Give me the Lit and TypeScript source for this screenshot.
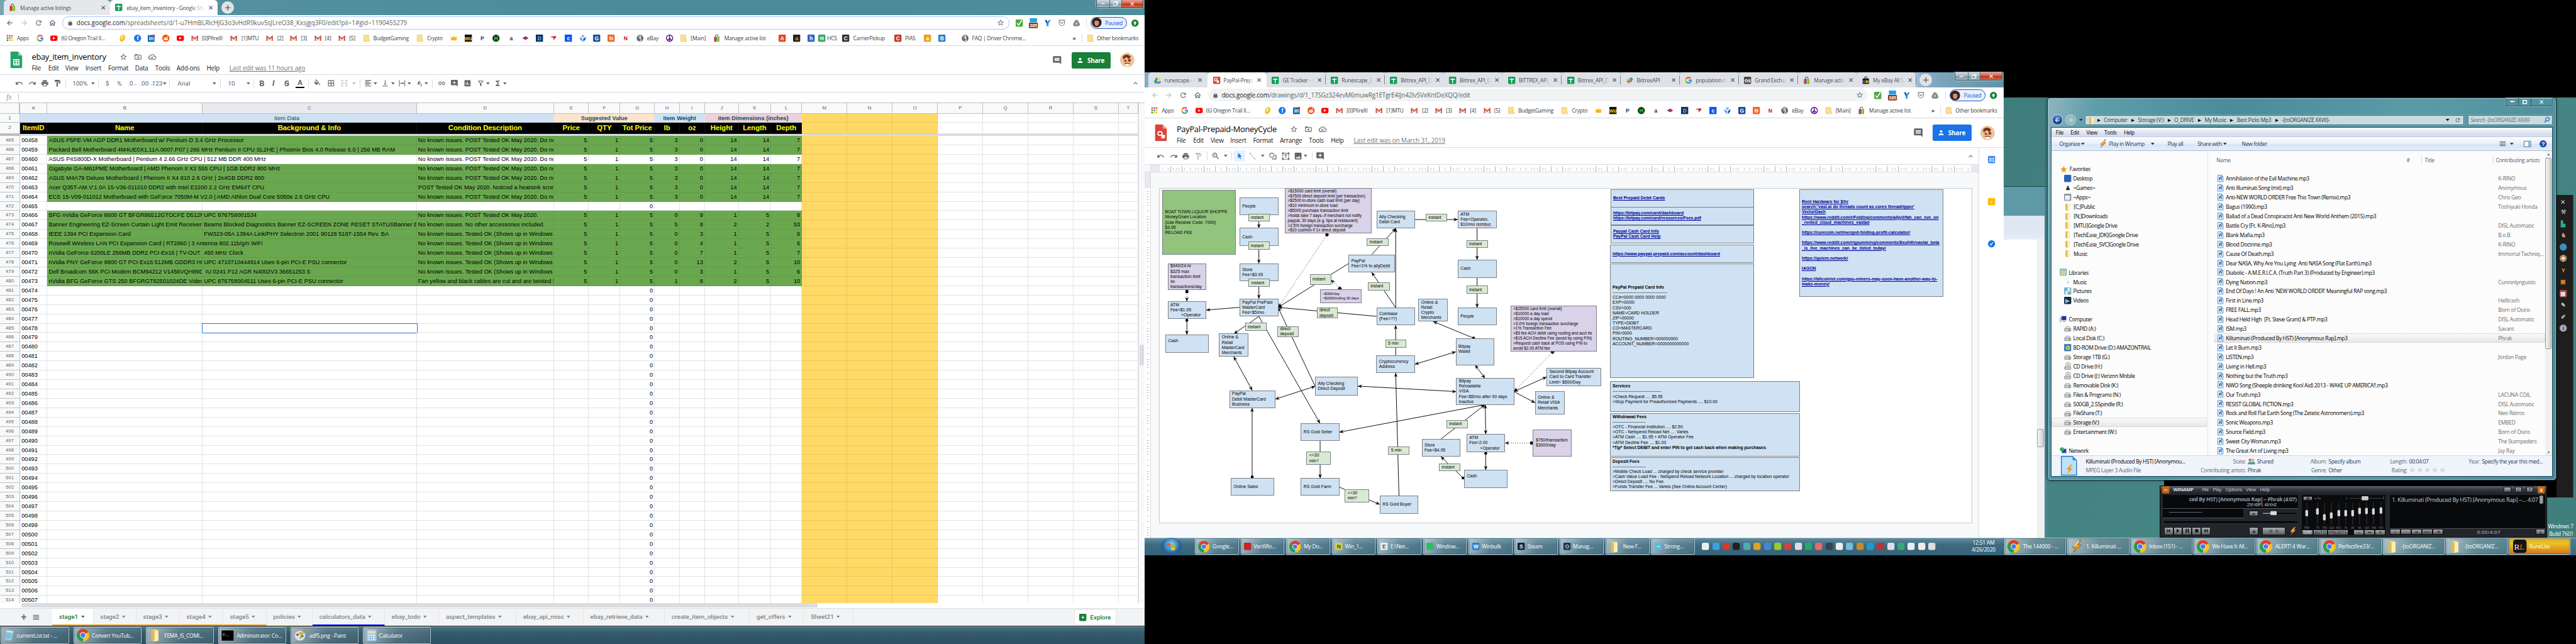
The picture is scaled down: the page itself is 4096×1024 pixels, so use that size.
import { LitElement, html, svg, css, nothing } from "lit";

/* ---------- shared pieces ---------- */

const base = css`
  :host { display: block; }
  * { box-sizing: border-box; }
  .row { display: flex; align-items: center; }
  .col { display: flex; flex-direction: column; }
  .grow { flex: 1 1 auto; }
  .track { display: flex; align-items: center; height: 100%; white-space: nowrap; }
  .slot { flex: none; display: flex; align-items: center; height: 100%; white-space: nowrap; }
  svg { display: block; flex: none; overflow: visible; }
  .ui { font-family: "Open Sans", "Noto Sans", sans-serif; letter-spacing: -0.35px; }
  .sep { width: 1px; height: 20px; background: #dadce0; }

  .strip { display: flex; align-items: flex-end; height: 34px; flex: none; }
  .tab { display: flex; align-items: center; height: 34px; flex: none; font-size: 12px; color: #45494d; padding: 0 10px 0 12px; border-radius: 8px 8px 0 0; gap: 9px; position: relative; }
  .tab.on { background: #fff; color: #3c4043; }
  .tab .lbl { flex: 1 1 0; overflow: hidden; white-space: nowrap; -webkit-mask-image: linear-gradient(90deg, #000 80%, transparent); }
  .newtab { width: 28px; height: 28px; border-radius: 50%; display: flex; align-items: center; justify-content: center; background: #dfe4e7; align-self: center; }
  .wctl { display: flex; align-self: flex-start; height: 18px; border: 1px solid #2c4a5a; border-top: 0; border-radius: 0 0 5px 5px; overflow: hidden; box-shadow: 0 0 0 1px #c8dbe3; }
  .wctl span { display: flex; align-items: center; justify-content: center; background: linear-gradient(#cbd9e0, #a5bac5 50%, #7f9aa9 50%, #9db6c3); border-right: 1px solid #4d6b79; color: #fff; }
  .wctl .x { background: linear-gradient(#e8a593, #cf5842 50%, #b8301c 50%, #d76a4d); border-right: 0; }

  .nav { height: 34px; flex: none; background: #fff; }
  .omni { display: flex; align-items: center; height: 28px; border-radius: 14px; background: #f1f3f4; padding: 0 10px; font-size: 14px; color: #5f6368; letter-spacing: -0.24px; }
  .omni b { font-weight: 400; color: #202124; }
  .pill { display: flex; align-items: center; gap: 8px; width: 81px; height: 27px; border: 1px solid #1a56c4; border-radius: 14px; background: #e8f0fe; color: #1a56c4; font-size: 12px; padding-left: 1px; }
  .marks { height: 35px; flex: none; background: #fff; border-bottom: 1px solid #d5d7da; font-size: 12px; color: #3c4043; }

  .dochead { height: 65px; flex: none; background: #fff; border-bottom: 1px solid #dadce0; display: flex; padding-left: 22px; }
  .title { height: 42px; font: 18px "Open Sans", sans-serif; letter-spacing: -0.35px; color: #000; display: flex; align-items: center; gap: 14px; padding-top: 5px; }
  .menus { height: 20px; font: 14px "Open Sans", sans-serif; letter-spacing: -0.35px; color: #202124; margin-top: -3px; }
  .menus .edit { color: #777; text-decoration: underline; letter-spacing: -0.12px; }
  .share { display: flex; align-items: center; justify-content: center; gap: 5px; width: 87px; height: 36px; border-radius: 4px; color: #fff; font: 700 14px "Open Sans", sans-serif; letter-spacing: -0.3px; }
  .tools { flex: none; background: #fff; color: #5f6368; font: 14px Roboto, sans-serif; border-bottom: 1px solid #dadce0; }
  .tools b, .tools i, .tools s, .tools u { font: 700 18px Roboto, sans-serif; color: #5f6368; }
  .tools i { font-style: italic; font-family: "Liberation Serif", serif; }
  .tools u { text-decoration: none; border-bottom: 4px solid #000; line-height: 18px; width: 20px; text-align: center; font-size: 16px; }

  .task { height: 40px; flex: none; display: flex; align-items: center; background: linear-gradient(#8fa9b2 0 1px, #46707e 2px, #34596a 40%, #2c5162); color: #fff; font: 12px "Open Sans", sans-serif; letter-spacing: -0.35px; }
  .tb { display: flex; align-items: center; gap: 6px; height: 38px; border: 1px solid #b9c8cf; border-radius: 3px; background: linear-gradient(100deg, rgba(255,255,255,.55), rgba(255,255,255,.16) 50%, rgba(255,255,255,.08)); box-shadow: inset 0 0 0 1px rgba(30,60,75,.5); padding: 0 6px; white-space: nowrap; overflow: hidden; flex: none; }
`;

const P: Record<string, string> = {
  back: "M20 11H7.83l5.59-5.59L12 4l-8 8 8 8 1.41-1.41L7.83 13H20v-2z",
  fwd: "M12 4l-1.41 1.41L16.17 11H4v2h12.17l-5.58 5.59L12 20l8-8z",
  reload: "M17.65 6.35C16.2 4.9 14.21 4 12 4c-4.42 0-7.99 3.58-7.99 8s3.57 8 7.99 8c3.73 0 6.84-2.55 7.73-6h-2.08c-.82 2.33-3.04 4-5.65 4-3.31 0-6-2.69-6-6s2.69-6 6-6c1.66 0 3.14.69 4.22 1.78L13 11h7V4l-2.35 2.35z",
  home: "M12 5.69l5 4.5V18h-2v-6H9v6H7v-7.81l5-4.5M12 3L2 12h3v8h6v-6h2v6h6v-8h3L12 3z",
  lock: "M18 8h-1V6c0-2.76-2.24-5-5-5S7 3.24 7 6v2H6c-1.1 0-2 .9-2 2v10c0 1.1.9 2 2 2h12c1.1 0 2-.9 2-2V10c0-1.1-.9-2-2-2zM8.9 8V6c0-1.71 1.39-3.1 3.1-3.1 1.71 0 3.1 1.39 3.1 3.1v2H8.9z",
  star: "M22 9.24l-7.19-.62L12 2 9.19 8.63 2 9.24l5.46 4.73L5.82 21 12 17.27 18.18 21l-1.63-7.03L22 9.24zM12 15.4l-3.76 2.27 1-4.28-3.32-2.88 4.38-.38L12 6.1l1.71 4.04 4.38.38-3.32 2.88 1 4.28L12 15.4z",
  starFull: "M12 17.27L18.18 21l-1.64-7.03L22 9.24l-7.19-.61L12 2 9.19 8.63 2 9.24l5.46 4.73L5.82 21z",
  undo: "M12.5 8c-2.65 0-5.05.99-6.9 2.6L2 7v9h9l-3.62-3.62c1.39-1.16 3.16-1.88 5.12-1.88 3.54 0 6.55 2.31 7.6 5.5l2.37-.78C21.08 11.03 17.15 8 12.5 8z",
  redo: "M18.4 10.6C16.55 8.99 14.15 8 11.5 8c-4.65 0-8.58 3.03-9.96 7.22L3.9 16c1.05-3.19 4.05-5.5 7.6-5.5 1.95 0 3.73.72 5.12 1.88L13 16h9V7l-3.6 3.6z",
  print: "M19 8H5c-1.66 0-3 1.34-3 3v6h4v4h12v-4h4v-6c0-1.66-1.34-3-3-3zm-3 11H8v-5h8v5zm3-7c-.55 0-1-.45-1-1s.45-1 1-1 1 .45 1 1-.45 1-1 1zm-1-9H6v4h12V3z",
  paint: "M18 4V3c0-.55-.45-1-1-1H5c-.55 0-1 .45-1 1v4c0 .55.45 1 1 1h12c.55 0 1-.45 1-1V6h1v4H9v11c0 .55.45 1 1 1h2c.55 0 1-.45 1-1v-9h8V4h-3z",
  fill: "M16.56 8.94L7.62 0 6.21 1.41l2.38 2.38-5.15 5.15c-.59.59-.59 1.54 0 2.12l5.5 5.5c.29.29.68.44 1.06.44s.77-.15 1.06-.44l5.5-5.5c.59-.58.59-1.53 0-2.12zM5.21 10L10 5.21 14.79 10H5.21zM19 11.5s-2 2.17-2 3.5c0 1.1.9 2 2 2s2-.9 2-2c0-1.33-2-3.5-2-3.5z",
  borders: "M3 3v18h18V3H3zm8 16H5v-6h6v6zm0-8H5V5h6v6zm8 8h-6v-6h6v6zm0-8h-6V5h6v6z",
  merge: "M3 3h7v2H5v4H3V3zm11 0h7v6h-2V5h-5V3zM3 15h2v4h5v2H3v-6zm16 0h2v6h-7v-2h5v-4zM3 11h5V9l3 3-3 3v-2H3v-2zm18 0h-5V9l-3 3 3 3v-2h5v-2z",
  align: "M15 15H3v2h12v-2zm0-8H3v2h12V7zM3 13h18v-2H3v2zm0 8h18v-2H3v2zM3 3v2h18V3H3z",
  valign: "M16 13h-3V3h-2v10H8l4 4 4-4zM4 19v2h16v-2H4z",
  wrap: "M3 3h2v18H3V3zm16 0h2v18h-2V3zM7 11h7V8l4 4-4 4v-3H7v-2z",
  rotate: "M12.8 5.8l-1.5-.7-5 11 1.9.1.9-2.2 4.1 1.8-.9 2.1 1.4 1.3zM20 21l1-5-1.6.7L14 5l-1 .5 5 11.700-1.600.7z",
  link: "M3.9 12c0-1.71 1.39-3.1 3.1-3.1h4V7H7c-2.76 0-5 2.24-5 5s2.24 5 5 5h4v-1.9H7c-1.71 0-3.1-1.39-3.1-3.1zM8 13h8v-2H8v2zm9-6h-4v1.9h4c1.71 0 3.1 1.39 3.1 3.1s-1.39 3.1-3.1 3.1h-4V17h4c2.76 0 5-2.24 5-5s-2.24-5-5-5z",
  addComment: "M22 4c0-1.1-.9-2-2-2H4c-1.1 0-2 .9-2 2v12c0 1.1.9 2 2 2h14l4 4V4zm-5 7h-4v4h-2v-4H7V9h4V5h2v4h4v2z",
  chart: "M19 3H5c-1.1 0-2 .9-2 2v14c0 1.1.9 2 2 2h14c1.1 0 2-.9 2-2V5c0-1.1-.9-2-2-2zM9 17H7v-7h2v7zm4 0h-2V7h2v10zm4 0h-2v-4h2v4z",
  filter: "M7 6h10l-5.01 6.3L7 6zm-2.75-.39C6.27 8.2 10 13 10 13v6c0 .55.45 1 1 1h2c.55 0 1-.45 1-1v-6s3.72-4.8 5.74-7.39c.51-.66.04-1.61-.79-1.61H5.04c-.83 0-1.3.95-.79 1.61z",
  sigma: "M18 4H6v2l6.5 6L6 18v2h12v-3h-7l5-5-5-5h7V4z",
  comment: "M21.99 4c0-1.1-.89-2-1.99-2H4c-1.1 0-2 .9-2 2v12c0 1.1.9 2 2 2h14l4 4-.01-18zM18 14H6v-2h12v2zm0-3H6V9h12v2zm0-3H6V6h12v2z",
  people: "M9 12c2.2 0 4-1.8 4-4s-1.8-4-4-4-4 1.8-4 4 1.800 4 4 4zm0 2c-3 0-8 1.500-8 4.500V20h16v-1.500c0-3-5-4.500-8-4.500z",
  image: "M21 19V5c0-1.100-.9-2-2-2H5c-1.100 0-2 .9-2 2v14c0 1.100.9 2 2 2h14c1.100 0 2-.9 2-2zM8.500 13.500l2.500 3.010L14.500 12l4.500 6H5l3.500-4.500z",
  zoomIn: "M15.500 14h-.79l-.28-.27C15.410 12.590 16 11.110 16 9.500 16 5.910 13.090 3 9.500 3S3 5.910 3 9.500 5.910 16 9.500 16c1.610 0 3.090-.59 4.230-1.570l.27.28v.79l5 4.990L20.490 19l-4.990-5zm-6 0C7.010 14 5 11.990 5 9.500S7.010 5 9.500 5 14 7.010 14 9.500 11.990 14 9.500 14zm2.500-4h-2v2H9v-2H7V9h2V7h1v2h2v1z",
  up: "M12 8l-6 6 1.410 1.410L12 10.830l4.590 4.580L18 14z",
  cursor: "M7 2v17l4-4 3 7 2.500-1-3-7h6L7 2z",
  line: "M4 3l3 0 0 2 12 14 2 0 0 2-3 0 0-2L6 5 4 5z",
  shape: "M9 3a7 7 0 1 0 0 14A7 7 0 0 0 9 3zm0 2a5 5 0 1 1 0 10A5 5 0 0 1 9 5zM18 9h3v12H10v-3h2v1h7v-8h-1z",
  textbox: "M1 1h5v1.500h12V1h5v5h-1.500v12H23v5h-5v-1.500H6V23H1v-5h1.500V6H1V1zm5 3v2H4v12h2v2h12v-2h2V6h-2V4H6zm2 3h8v2.200h-3V17h-2V9.200H8z",
  move: "M20 6h-8l-2-2H4c-1.100 0-2 .9-2 2v12c0 1.100.9 2 2 2h16c1.100 0 2-.9 2-2V8c0-1.100-.9-2-2-2zm0 12H4V8h16v10zm-8-1v-3H8v-2h4V9l4 4z",
  cloud: "M19.350 10.040A7.490 7.490 0 0 0 12 4C9.110 4 6.600 5.640 5.350 8.040A5.990 5.990 0 0 0 6 20h13a5 5 0 0 0 .350-9.960zM19 18H6a4 4 0 0 1 0-8h.710C7.370 7.690 9.480 6 12 6a5.500 5.500 0 0 1 5.500 5.500v.5H19a3 3 0 0 1 0 6zm-9-3.800l-2-2-1.300 1.300L10 17l5.500-5.500-1.300-1.300z",
  pocket: "M3 3h18v9a9 9 0 0 1-18 0V3zm2 2v7a7 7 0 0 0 14 0V5H5zm7 10.500L6.500 10 8 8.600l4 4 4-4L17.500 10z",
  list: "M3 5h18v2H3zm0 4h18v2H3zm0 4h18v2H3zm0 4h18v2H3z",
};
const ic = (n: string, s = 18, c = "#5f6368") => html`<svg width=${s} height=${s} viewBox="0 0 24 24" fill=${c}><path d=${P[n]}></path></svg>`;
const caret = (c = "#5f6368") => html`<svg width="8" height="5" viewBox="0 0 8 5"><path d="M0 0h8L4 5z" fill=${c}></path></svg>`;
const cross = (c = "#45494d") => html`<svg width="9" height="9" viewBox="0 0 9 9"><path d="M.8.8l7.400 7.400M8.200.8L.8 8.200" stroke=${c} stroke-width="1.500"></path></svg>`;

/* 16-unit badge icons */
const box = (inner: unknown, s = 16) => html`<svg width=${s} height=${s} viewBox="0 0 16 16">${inner}</svg>`;
const badge = (bg: string, t: string, fg = "#fff", r = 2) => box(svg`<rect width="16" height="16" rx=${r} fill=${bg}></rect><text x="8" y="12.500" text-anchor="middle" font-family="Liberation Sans, sans-serif" font-size="12" font-weight="700" fill=${fg}>${t}</text>`);
const I = {
  apps: () => box(svg`${[0, 1, 2, 3, 4, 5, 6, 7, 8].map(i => svg`<rect x=${1 + (i % 3) * 5} y=${1 + Math.floor(i / 3) * 5} width="3.400" height="3.400" fill=${["#e43", "#e43", "#e43", "#1a9b55", "#38f", "#fb0", "#1a9b55", "#fb0", "#fb0"][i]}></rect>`)}`),
  google: () => box(svg`<g fill="none" stroke-width="3"><path d="M13 4.200A6 6 0 0 0 2.800 5" stroke="#ea4335"></path><path d="M2.800 5a6 6 0 0 0 0 6" stroke="#fbbc05"></path><path d="M2.800 11a6 6 0 0 0 9.500 1.300" stroke="#34a853"></path><path d="M12.300 12.300A6 6 0 0 0 14 8H8.500" stroke="#4285f4"></path></g>`),
  yt: () => box(svg`<rect y="2" width="16" height="12" rx="3" fill="#f00"></rect><path d="M6 5l5 3-5 3z" fill="#fff"></path>`),
  egg: () => box(svg`<ellipse cx="8" cy="8" rx="5.500" ry="8" fill="#f5b61a" transform="rotate(25 8 8)"></ellipse><ellipse cx="7" cy="7" rx="3" ry="5" fill="#ffe26b" transform="rotate(25 8 8)"></ellipse>`),
  fb: () => badge("#1877f2", "f", "#fff", 8),
  inn: () => box(svg`<rect y="1" width="15" height="15" rx="1" fill="#0a66a8"></rect><text x="7.500" y="13" text-anchor="middle" font-family="Liberation Sans" font-size="12" font-weight="700" fill="#fff">in</text><circle cx="13.500" cy="2" r="2.500" fill="#e33"></circle>`),
  reddit: () => box(svg`<circle cx="8" cy="8" r="8" fill="#ff4500"></circle><ellipse cx="8" cy="9.500" rx="5" ry="3.500" fill="#fff"></ellipse><circle cx="6" cy="9" r="1" fill="#f40"></circle><circle cx="10" cy="9" r="1" fill="#f40"></circle><circle cx="11" cy="4" r="1.200" fill="#fff"></circle>`),
  gmail: () => box(svg`<rect x="1" y="3" width="14" height="11" fill="#e8e8e8"></rect><path d="M2 14V4l6 5.500L14 4v10" fill="none" stroke="#d14836" stroke-width="2.400"></path>`),
  folder: () => box(svg`<path d="M2 1h11v9l1.500 1v4H2z" fill="#fbe08e" stroke="#e0b23c" stroke-width=".8"></path>`),
  bag: () => box(svg`<path d="M5 6V3.500a3 3 0 0 1 6 0V6" fill="none" stroke="#222" stroke-width="1.200"></path><path d="M2 5h3.500v11H2z" fill="#e53238"></path><path d="M5.500 5H8v11H5.500z" fill="#0064d2"></path><path d="M8 5h3v11H8z" fill="#f5af02"></path><path d="M11 5h3v11h-3z" fill="#86b817"></path>`),
  bagDark: () => box(svg`<path d="M5 5V3a3 3 0 0 1 6 0v2" fill="none" stroke="#111" stroke-width="1.400"></path><rect x="1" y="4" width="14" height="12" fill="#111"></rect><path d="M2 8h3v6H2z" fill="#e53238"></path><path d="M5 8h3v6H5z" fill="#0064d2"></path><path d="M8 8h3v6H8z" fill="#f5af02"></path><path d="M11 8h3v6h-3z" fill="#86b817"></path>`),
  sheet: () => box(svg`<rect x="0" y="0" width="16" height="16" rx="2" fill="#0f9d58"></rect><path d="M8 3v11M3 6h10" stroke="#fff" stroke-width="2"></path>`),
  drive: () => box(svg`<path d="M5.500 1h5L16 10.500h-5z" fill="#ffcf48"></path><path d="M5.500 1L0 10.500 2.500 15 8 5.500z" fill="#11a861"></path><path d="M5 10.500h11L13.500 15h-11z" fill="#4285f4"></path>`),
  draw: () => box(svg`<rect width="16" height="16" rx="2" fill="#db4437"></rect><circle cx="6" cy="6.500" r="3" fill="none" stroke="#fff" stroke-width="1.800"></circle><rect x="8" y="8.500" width="5" height="5" fill="#fff"></rect>`),
  chrome: (s = 20) => box(svg`<circle cx="8" cy="8" r="8" fill="#fbc116"></circle><path d="M8 8L1.070 4A8 8 0 0 1 14.930 4z" fill="#e33b2e"></path><path d="M8 8L1.070 4A8 8 0 0 0 8 16z" fill="#1f9d57"></path><circle cx="8" cy="8" r="3.800" fill="#fff"></circle><circle cx="8" cy="8" r="3" fill="#3f7de8"></circle>`, s),
  fold: (s = 22) => box(svg`<path d="M3 1h6l3 1v13l-6 1-3-1z" fill="#f3dc86"></path><path d="M3 1l4 2v13l-4-1.500z" fill="#d9b95a"></path><path d="M7 3l5-1v13l-5 1z" fill="#fbeeb0"></path>`, s),
  crown: () => box(svg`<path d="M1 4l3.500 3L8 3l3.500 4L15 4l-1 9H2z" fill="#fbb417"></path>`),
  peace: () => box(svg`<circle cx="8" cy="8" r="7" fill="#fff" stroke="#5b0f9b" stroke-width="2"></circle><path d="M8 1v14M8 8l-5 5M8 8l5 5" stroke="#5b0f9b" stroke-width="2"></path>`),
  globe: () => box(svg`<circle cx="8" cy="8" r="7.500" fill="#5f6368"></circle><path d="M4 4l5-1 1 3-4 2 4 1v4l-3 1" fill="none" stroke="#fff" stroke-width="1.600"></path>`),
  flag: () => box(svg`<path d="M1 8l7-4 7 4-7 4z" fill="#e31837"></path><path d="M1 8l7-4 3 1.500-7 4.500z" fill="#2a5cc9"></path>`),
  sev: () => box(svg`<path d="M1 5l12-2c3 0 2 4-6 10 2-4 3-6 1-6z" fill="#d3202e"></path>`),
  cube: () => box(svg`<path d="M8 0l4 3-4 4-4-4z" fill="#7fb4f5"></path><path d="M1 5l6 4v7l-5-5z" fill="#5b9cf0"></path><path d="M15 5l-6 4v7l5-5z" fill="#1c57b5"></path>`),
  check: () => box(svg`<rect width="16" height="16" rx="2" fill="#4fa83d"></rect><path d="M3 8l3.500 4.500L14 1" fill="none" stroke="#fff" stroke-width="2.200"></path>`),
  cal: () => html`<svg width="20" height="20" viewBox="0 0 20 20"><rect x="2" y="0" width="16" height="9" fill="#1da1f2"></rect><rect y="10" width="20" height="12" rx="2" fill="#8a3208"></rect><text x="10" y="19.500" font-size="10" font-weight="700" text-anchor="middle" fill="#fff" font-family="Liberation Sans">385</text></svg>`,
  vee: () => box(svg`<path d="M2 1l4 .5L8 6l3-5h4L10 9v6H6V9z" fill="#2a8fe0"></path><path d="M2 1l4 .5L8 6 6 9z" fill="#0b4f9c"></path>`),
  gdrive: () => box(svg`<path d="M5.500 1h5L16 10.500 13.500 15h-11L0 10.500z" fill="#8a8a8a"></path><path d="M8 6l2.700 4.500H5.300z" fill="#ddd"></path>`),
  upd: () => box(svg`<circle cx="8" cy="8" r="8" fill="#188038"></circle><path d="M8 3.500L4 8h2.500v4h3V8H12z" fill="#fff"></path>`),
  face: () => html`<svg width="22" height="22" viewBox="0 0 22 22"><circle cx="11" cy="11" r="11" fill="#3a221c"></circle><ellipse cx="11" cy="12" rx="5" ry="7" fill="#c9947b"></ellipse><path d="M6 8q5-7 10 0l-2-1H8z" fill="#2a1512"></path></svg>`,
  me: () => html`<svg width="32" height="32" viewBox="0 0 32 32"><circle cx="16" cy="16" r="16" fill="#e9c79c"></circle><path d="M6 8q8-8 18 0l-4 6-6-4-7 5z" fill="#7a3418"></path><circle cx="12" cy="18" r="3" fill="#c0412a"></circle><circle cx="21" cy="17" r="3.500" fill="#a33a20"></circle><path d="M9 25q7-5 14 0l-5 5h-5z" fill="#fff3dc"></path><path d="M10 25q6-4 12 0" stroke="#5a2413" stroke-width="2" fill="none"></path></svg>`,
  bolt: (s = 20) => box(svg`<path d="M11 0L2 9l4 1-3 6 10-10-4-1 4-5z" fill="#f39b1c" stroke="#7a4300" stroke-width=".6"></path><path d="M10 1L4 8" stroke="#fff" stroke-width="1"></path>`, s),
};

type Item = [number, unknown];
const track = (start: number, end: number, items: Item[]) => html`<div class="track">
  <div class="slot" style="width:${items[0][0] - start}px"></div>
  ${items.map(([x, c], i) => html`<div class="slot" style="width:${(i + 1 < items.length ? items[i + 1][0] : end) - x}px">${c}</div>`)}
</div>`;

const MARKS: Item[] = [
  [14, I.apps()], [38, "Apps"], [81, I.google()], [113, I.yt()], [137, "(6) Oregon Trail II..."], [266, I.egg()], [299, I.fb()], [331, I.inn()], [363, I.reddit()], [395, I.yt()],
  [427, I.gmail()], [451, "[0]PfireIII"], [515, I.gmail()], [540, "[1]MTU"], [595, I.gmail()], [620, "[2]"], [649, I.gmail()], [673, "[3]"], [703, I.gmail()], [727, "[4]"], [757, I.gmail()], [781, "[5]"],
  [811, I.folder()], [835, "BudgetGaming"], [931, I.folder()], [955, "Crypto"],
  [1007, I.crown()], [1039, badge("#111", "wu", "#fc0", 0)], [1071, badge("#fff", "P", "#123a8c")], [1102, badge("#0b3d12", "H", "#3fd04a", 8)], [1135, badge("#fff", "a", "#4b1052")], [1167, I.flag()], [1199, badge("#0f3160", "D", "#7fb2e8", 0)], [1230, I.sev()], [1263, badge("#0b55f5", "c", "#fff", 0)], [1295, I.cube()], [1327, badge("#1c4f9c", "G")], [1359, badge("#f0652a", "N")], [1391, badge("#fff", "N", "#d00914")],
  [1423, I.globe()], [1447, "eBay"], [1489, I.peace()], [1521, I.folder()], [1545, "[Main]"], [1595, I.bag()], [1620, "Manage active list"],
];
const MORE: Item[] = [
  [1742, badge("#e6441f", "A")], [1774, badge("#222", "a", "#ff9900")], [1806, badge("#2a63c8", "h")], [1830, badge("#3aa657", "H")], [1850, "HCS"], [1884, badge("#333", "C")], [1908, "CarrierPickup"], [2000, badge("#c8382b", "C")], [2024, "PIAS"], [2066, badge("#e9a21c", "a")], [2098, badge("#2f80c9", "B")], [2150, I.globe()], [2174, "FAQ | Driver Chrome..."],
];
const navRow = (w: number, url: unknown, backOn: boolean, ox: number, focused: boolean) => html`<div class="nav">${track(0, w, [
  [13, ic("back", 18, backOn ? "#5f6368" : "#bdc1c6")], [45, ic("fwd", 18, "#bdc1c6")], [77, ic("reload", 18)], [109, ic("home", 18)],
  [ox, html`<div class="omni ui ${focused ? "foc" : ""}" style="width:${w - 303 - ox}px">${ic("lock", 13)}<span style="margin-left:8px" class="grow url">${url}</span>${ic("star", 17)}</div>`],
  [w - 289, I.check()], [w - 259, I.cal()], [w - 225, I.vee()], [w - 194, ic("pocket", 18, "#777")], [w - 161, I.gdrive()], [w - 131, html`<span class="sep"></span>`],
  [w - 121, html`<div class="pill ui">${I.face()}Paused</div>`], [w - 30, I.upd()],
])}</div>`;
const marksRow = (w: number, extra: Item[]) => html`<div class="marks ui">${track(0, w, [...MARKS, ...extra, [w - 161, html`<b>»</b>`], [w - 141, html`<span class="sep"></span>`], [w - 130, I.folder()], [w - 107, "Other bookmarks"]])}</div>`;
const controls = html`<div class="wctl"><span style="width:29px"><svg width="11" height="4"><rect width="11" height="4" fill="#fff" stroke="#444" stroke-width=".6"></rect></svg></span><span style="width:27px"><svg width="11" height="10"><rect x="3" y="1" width="7" height="6" fill="none" stroke="#fff" stroke-width="1.500"></rect><rect x="1" y="3" width="7" height="6" fill="#7f9aa9" stroke="#fff" stroke-width="1.500"></rect></svg></span><span class="x" style="width:47px">${cross("#fff")}</span></div>`;
const pipe = html`<span class="sep"></span>`;

/* ---------- spreadsheet window ---------- */

const COLS = [61, 347, 479, 307, 78, 70, 77.5, 55.5, 56.5, 75.5, 72.5, 69, 101, 101.5, 101.5, 101, 101, 101, 101, 44];
const GRID = "45px " + COLS.map(c => c + "px").join(" ");
const NK = "No known issues. POST Tested OK May 2020. Do not";
const TW = "No known issues. Tested OK (Shows up in Windows 7)";
const ITEMS: Record<number, { n: string; b?: string; c: string; v: number[]; white?: boolean }> = {
  465: { n: "ASUS P5PE-VM AGP DDR1 Motherboard w/ Pentium D 3.4 GHz Processor", c: NK, v: [5, 1, 5, 3, 0, 14, 14, 7] },
  466: { n: "Packard Bell Motherboard 4M4UE0X1.11A.0007.P07 | 266 MHz Pentium II CPU SL2HE | Phoenix Bios 4.0 Release 6.0 | 256 MB RAM", c: NK, v: [5, 1, 5, 3, 0, 14, 14, 7] },
  467: { n: "ASUS P4S800D-X Motherboard | Pentium 4 2.66 GHz CPU | 512 MB DDR 400 MHz", c: NK, v: [5, 1, 5, 3, 0, 14, 14, 7], white: true },
  468: { n: "Gigabyte GA-M61PME Motherboard | AMD Phenom II X2 555 CPU | 1GB DDR2 800 MHz", c: NK, v: [5, 1, 5, 3, 0, 14, 14, 7] },
  469: { n: "ASUS M4A79 Deluxe Motherboard | Phenom II X4 810 2.6 GHz | 2x4GB DDR2 800", c: NK, v: [5, 1, 5, 3, 0, 14, 14, 7] },
  470: { n: "Acer Q35T-AM.V:1.0A 15-V36-011010 DDR2 with Intel E2200 2.2 GHz EM64T CPU", c: "POST Tested OK May 2020. Noticed a heatsink screw", v: [5, 1, 5, 3, 0, 14, 14, 7] },
  471: { n: "ECS 15-V09-011012 Motherboard with GeForce 7050M-M V2.0 | AMD Athlon Dual Core 5050e 2.6 GHz CPU", c: NK, v: [5, 1, 5, 3, 0, 14, 14, 7] },
  473: { n: "BFG nVidia GeForce 8600 GT BFGR86512GTOCFE D512MB", b: "UPC 876758001534", c: "No known issues. POST Tested OK May 2020.", v: [5, 1, 5, 0, 9, 1, 5, 8] },
  474: { n: "Banner Engineering EZ-Screen Curtain Light Emit Receiver", b: "Beams Blocked Diagnostics Banner EZ-SCREEN ZONE RESET STATUSBanner E", c: "No known issues. No other accessories included.", v: [5, 1, 5, 5, 8, 2, 2, 53] },
  475: { n: "IEEE 1394 PCI Expansion Card", b: "FW323-05A 1394A Link/PHY Selectron 2001 90128 5187-1554 Rev. BA", c: TW, v: [5, 1, 5, 0, 3, 1, 5, 6] },
  476: { n: "Rosewill Wireless LAN PCI Expansion Card | RT2860 | 3 Antenna 802.11b/g/n WiFi", c: TW, v: [5, 1, 5, 0, 4, 1, 5, 6] },
  477: { n: "nVidia GeForce 6200LE 256MB DDR2 PCI-Ex16 | TV-OUT", b: "450 MHz Clock", c: TW, v: [5, 1, 5, 0, 7, 1, 5, 7] },
  478: { n: "nVidia PNY GeForce 9800 GT PCI-Ex16 512MB GDDR3 HDMI", b: "UPC 4710710444914 Uses 6-pin PCI-E PSU connector", c: TW, v: [5, 1, 5, 0, 13, 2, 5, 10] },
  479: { n: "Dell Broadcom 56K PCI Modem BCM94212 V1456VQH89D", b: " IU 0241 P12 AGR N4002V3 36651253 S", c: TW, v: [5, 1, 5, 0, 3, 1, 5, 6] },
  480: { n: "nVidia BFG GeForce GTS 250 BFGRGT82501024DE Video Card", b: "UPC 876758004511 Uses 6-pin PCI-E PSU connector", c: "Fan yellow and black cables are cut and are twisted back", v: [5, 1, 5, 1, 8, 2, 5, 10] },
};
const SHEETS: [string, number, string][] = [["stage1", 92, "#ff9900"], ["stage2", 96, "#ff9900"], ["stage3", 97, "#ff9900"], ["stage4", 97, "#ff9900"], ["stage5", 97, "#ff9900"], ["policies", 103, "#fff2cc"], ["calculators_data", 162, "#0000ff"], ["ebay_todo", 121, ""], ["aspect_templates", 173, ""], ["ebay_api_misc", 150, ""], ["ebay_retrieve_data", 182, ""], ["create_item_objects", 190, ""], ["get_offers", 121, ""], ["Sheet21", 110, ""]];

class SheetWindow extends LitElement {
  static styles = [base, css`
    :host { width: 2560px; height: 1440px; background: #fff; }
    .win { height: 1440px; }
    .strip { background: linear-gradient(90deg, #77a6b0, #5391a0 20%, #4a8a99 60%, #4e8d9b); padding-left: 8px; }
    .tab { background: #e4e8eb; }
    .foc { border: 2px solid #a8c7fa; background: #fff; height: 30px; } .url { letter-spacing: -0.05px; }
    .formula { height: 23px; flex: none; border-bottom: 1px solid #c0c0c0; display: flex; align-items: center; padding: 0 0 0 14px; font: italic 17px "Liberation Serif", serif; color: #999; gap: 14px; }
    .grid { height: 1118px; flex: none; overflow: hidden; display: flex; }
    .r { display: grid; font: 13px "Liberation Sans", Arial, sans-serif; color: #000; height: 21px; }
    .r > div { border-right: 1px solid #e2e3e3; border-bottom: 1px solid #e2e3e3; padding: 0 3px; line-height: 20px; white-space: pre; overflow: hidden; min-width: 0; }
    .r > .h { background: #f8f9fa; color: #666; font-size: 11px; text-align: center; border-color: #c0c0c0; padding: 0; }
    .num { text-align: right; }
    .gr > div.g { background: #6aa84f; border-color: #629c49; }
    .r > div.over { overflow: visible; border-right-color: transparent; position: relative; z-index: 1; }
    .r > div.y { background: #ffd966; border-color: #e9c65d; }
    .head { height: 24px; }
    .head > div { background: #f8f9fa; border-color: #c0c0c0; text-align: center; color: #5f6368; font-size: 11px; line-height: 23px; }
    .head > .sel { background: #e8eaed; }
    .head > .corner { border-right: 4px solid #bcbcbc; }
    .cat > div { text-align: center; color: #134f5c; }
    .cat > .b4 { font-weight: 700; }
    .cat > .b { background: #cfe2f3; } .cat > .o { background: #fce5cd; } .cat > .p { background: #ead1dc; }
    .names { height: 24px; }
    .names > .k { background: #000; color: #ff0; font: 700 16px/23px "Liberation Sans", sans-serif; text-align: center; border-color: #111; letter-spacing: -.1px; }
    .freeze { height: 5px; background: #d9dbe6; display: flex; } .freeze i { width: 45px; background: #bcbcbc; }
    .r > div.pick { outline: 2px solid #1a73e8; outline-offset: -1px; border-color: transparent; }
    .vs { width: 15px; background: #f8f9fa; border-left: 1px solid #dadce0; padding: 541px 2px 0; } .vs i { display: block; height: 46px; background: #dadce0; border-radius: 4px; }
    .hs { height: 12px; flex: none; padding: 1px 0 1px 48px; background: #fff; } .hs i { display: block; width: 1780px; height: 10px; border-radius: 4px; background: #dadce0; }
    .tabs { height: 40px; flex: none; background: #f1f3f4; border-top: 1px solid #dadce0; display: flex; color: #80868b; font: 500 14px Roboto, sans-serif; }
    .lead { width: 117px; display: flex; align-items: center; padding-left: 47px; gap: 12px; font-size: 22px; color: #5f6368; }
    .st { display: flex; align-items: center; gap: 6px; padding-left: 15px; border-right: 1px solid #e3e5e8; border-bottom: 4px solid transparent; }
    .st.on { background: #fff; color: #188038; }
    .explore { align-self: center; display: flex; align-items: center; gap: 8px; height: 32px; background: #fff; border-radius: 3px; padding: 0 10px; color: #188038; margin-right: 66px; box-shadow: 0 0 2px #bbb; }
    .task { gap: 10px; padding-left: 2px; border-top: 2px solid #111; }
    .tb { width: 152px; }
  `];
  row(n: number) {
    const d = ITEMS[n];
    const id = "00" + (n - 7);
    const g = d && !d.white ? "g" : "";
    const over = d && !d.b;
    return html`<div class="r gr" style="grid-template-columns:${GRID}">
      <div class="h">${n}</div><div>${id}</div>
      <div class="${g} ${over ? "over" : ""}">${d?.n ?? nothing}</div>
      <div class="${g} ${n === 485 ? "pick" : ""}">${d?.b ?? nothing}</div>
      <div class=${g}>${d?.c ?? nothing}</div>
      ${[0, 1, 2, 3, 4, 5, 6, 7].map(i => html`<div class="num ${g}">${d ? d.v[i] : i === 2 ? 0 : nothing}</div>`)}
      <div class="y"></div><div class="y"></div><div class="y"></div><div></div><div></div><div></div><div></div><div></div>
    </div>`;
  }
  render() {
    return html`<div class="col win">
      <div class="strip ui">
        <div class="tab" style="width:238px">${I.bag()}<span class="lbl">Manage active listings</span>${cross()}</div>
        <div class="tab on" style="width:240px">${I.sheet()}<span class="lbl">ebay_item_inventory - Google Sheets</span>${cross()}</div>
        <div class="newtab" style="margin:0 auto 0 9px"><svg width="12" height="12"><path d="M6 0v12M0 6h12" stroke="#444" stroke-width="1.600"></path></svg></div>${controls}<span style="width:3px"></span>
      </div>
      ${navRow(2560, html`<b>docs.google.com</b>/spreadsheets/d/1-u7HmBLRicHJG3o3vHdR9kuv5sJLreO38_Kxsjgq3F0/edit?pli=1#gid=1190455279`, true, 139, true)}
      ${marksRow(2560, MORE)}
      <div class="dochead">
        <svg width="28" height="38" viewBox="0 0 28 38" style="margin-top:13px"><path d="M3 0h15l9 9v26a2 2 0 0 1-2 2H3a2 2 0 0 1-2-2V2a2 2 0 0 1 2-2z" fill="#21a465"></path><path d="M18 0l9 9h-9z" fill="#8ed1b1"></path><path d="M7 17h14v14H7zm2 2v2.500h4V19zm6 0v2.500h4V19zm-6 4v2.500h4V23zm6 0v2.500h4V23zm-6 4v2h4v-2zm6 0v2h4v-2z" fill="#fff"></path></svg>
        <div class="grow" style="padding-left:21px">
          <div class="title">ebay_item_inventory <span style="width:2px"></span>${ic("star", 18)}${ic("move", 18)}${ic("cloud", 18)}</div>
          <div class="menus">${track(71, 700, [[71, "File"], [108, "Edit"], [146, "View"], [191, "Insert"], [242, "Format"], [302, "Data"], [347, "Tools"], [395, "Add-ons"], [462, "Help"], [513, html`<span class="edit">Last edit was 11 hours ago</span>`]])}</div>
        </div>
        <div class="row" style="gap:22px;padding-right:23px">${ic("comment", 22)}<div class="share" style="background:#188038">${ic("people", 17, "#fff")}Share</div>${I.me()}</div>
      </div>
      <div class="tools" style="height:39px">${track(0, 2560, [[34, ic("undo")], [63, ic("redo")], [91, ic("print")], [120, ic("paint")], [146, pipe], [162, "100%"], [204, caret()], [220, pipe], [236, "$"], [262, "%"], [286, html`.0<sub>←</sub>`], [313, html`.00<sub>→</sub>`], [340, "123"], [365, caret()], [379, pipe], [397, "Arial"], [476, caret()], [493, pipe], [510, "10"], [551, caret()], [567, pipe], [580, html`<b>B</b>`], [608, html`<i>I</i>`], [636, html`<s style="text-decoration:line-through">S</s>`], [661, html`<u>A</u>`], [690, pipe], [701, ic("fill")], [731, ic("borders")], [761, ic("merge", 18, "#bdc1c6")], [788, caret("#bdc1c6")], [805, pipe], [815, ic("align")], [836, caret()], [853, ic("valign")], [875, caret()], [891, ic("wrap")], [912, caret()], [929, ic("rotate")], [950, caret()], [966, pipe], [979, ic("link")], [1008, ic("addComment")], [1037, ic("chart")], [1066, ic("filter")], [1087, caret()], [1105, ic("sigma")], [1126, caret()], [2530, ic("up")]])}</div>
      <div class="formula"><span>fx</span><span class="sep" style="height:17px;background:#c0c0c0"></span></div>
      <div class="grid"><div class="grow">
        <div class="r head" style="grid-template-columns:${GRID}"><div class="corner"></div>${COLS.map((_, i) => html`<div class=${i === 2 ? "sel" : ""}>${"ABCDEFGHIJKLMNOPQRST"[i]}</div>`)}</div>
        <div class="r cat" style="grid-template-columns:${GRID}"><div class="h">1</div><div class="b" style="grid-column:span 4">Item Data</div><div class="o b4" style="grid-column:span 3">Suggested Value</div><div class="b b4" style="grid-column:span 2">Item Weight</div><div class="p b4" style="grid-column:span 3">Item Dimensions (inches)</div><div class="y"></div><div class="y"></div><div class="y"></div><div></div><div></div><div></div><div></div><div></div></div>
        <div class="r names" style="grid-template-columns:${GRID}"><div class="h" style="line-height:23px">2</div>${["ItemID", "Name", "Background & Info", "Condition Description", "Price", "QTY", "Tot Price", "lb", "oz", "Height", "Length", "Depth"].map(t => html`<div class="k">${t}</div>`)}<div class="y"></div><div class="y"></div><div class="y"></div><div></div><div></div><div></div><div></div><div></div></div>
        <div class="freeze"><i></i></div>
        ${Array.from({ length: 50 }, (_, i) => this.row(465 + i))}
      </div><div class="vs"><i></i></div></div>
      <div class="hs"><i></i></div>
      <div class="tabs"><div class="lead"><span>+</span>${ic("list", 18)}</div>
        ${SHEETS.map(([t, w, c], i) => html`<div class="st ${i ? "" : "on"}" style="width:${w}px;border-bottom-color:${c || "transparent"}">${t}${caret(i ? "#80868b" : "#188038")}</div>`)}
        <span class="grow"></span><div class="explore">${badge("#188038", "+")}Explore</div></div>
      <div class="task">${([[html`<svg width="22" height="26" viewBox="0 0 22 26"><path d="M5 2l15 2-4 21L1 22z" fill="#8fd0e6"></path><path d="M5 2l15 2-1 3L4 5z" fill="#dfe8ec"></path><path d="M5 9l11 2M4 13l11 2M3 17l11 2" stroke="#3f9cba"></path></svg>`, "currentList.txt - ..."], [I.chrome(28), "Convert YouTub..."], [I.fold(28), "FEMA_IS_COMI..."], [html`<svg width="28" height="24"><rect width="28" height="24" fill="#000" stroke="#aaa"></rect><text x="3" y="12" font-size="8" fill="#fff" font-family="Liberation Mono">C:\_</text></svg>`, "Administrator: Co..."], [html`<svg width="28" height="28" viewBox="0 0 24 26"><ellipse cx="12" cy="14" rx="11" ry="10" fill="#cfe3f2"></ellipse><circle cx="7" cy="12" r="2.500" fill="#d33"></circle><circle cx="13" cy="9" r="2.500" fill="#e90"></circle><circle cx="17" cy="15" r="2.500" fill="#3a3"></circle><path d="M22 0L12 20" stroke="#c80" stroke-width="2"></path></svg>`, "adf5.png - Paint"], [html`<svg width="22" height="26"><rect width="22" height="26" rx="2" fill="#9cc8ea"></rect><rect x="3" y="3" width="16" height="6" fill="#f5d9a0"></rect><path d="M4 12h14v11H4z" fill="#fff"></path><path d="M8 12v11M13 12v11M4 16h14M4 20h14" stroke="#4a86c0"></path></svg>`, "Calculator"]] as [unknown, string][]).map(([i, t]) => html`<div class="tb">${i}${t}</div>`)}</div>
    </div>`;
  }
}
customElements.define("sheet-window", SheetWindow);

/* ---------- drawing window ---------- */

/* [kind, left, top, right, bottom, text, style]; lengths in thirds of a pixel from the canvas origin */
type Node = [string, number, number, number, number, string, string?];
const NODES: Node[] = [
  ["gr", 55, 44, 548, 476, "BOAT TOWN LIQUOR SHOPPE\nMoneyGram Location\n(Use Receive Code: 7000)\n$3.95\nRELOAD FEE"],
  ["bl", 573, 93, 832, 212, "People"], ["in", 631, 202, 773, 254, "instant"],
  ["bl", 573, 298, 832, 418, "Cash"], ["in", 631, 391, 773, 443, "instant"],
  ["bl", 573, 535, 832, 653, "Store\nFee=$3.95"], ["in", 635, 640, 776, 692, "instant"],
  ["bl", 573, 772, 832, 889, "PayPal PrePaid\nMasterCard\nFee=$5/mo"],
  ["pu", 878, 29, 1457, 334, ">$15000 card limit (overall)\n>$7500 direct deposit limit (per transaction)\n>$2500 in-store cash load limit (per day)\n>$10 minimum in-store load\n>$5000 purchase transaction limit\n>holds take 7 days--if merchant not notify\npaypal, 30 days (e.g. tips at restaurant)\n>2.5% foreign transaction surcharge\n>$10 cushion if 1x direct deposit", "s"],
  ["pu", 91, 535, 350, 713, "$940/24-hr\n$325 max\ntransaction limit\n9x\ntransactions/day"],
  ["bl", 91, 789, 350, 907, "ATM\nFee=$1.95\n         +Operator"], ["bl", 76, 1013, 365, 1132, "Cash\n "],
  ["bl", 436, 1007, 632, 1160, "Online &\nRetail\nMasterCard\nMerchants"],
  ["in", 610, 935, 752, 988, "instant"], ["in", 826, 958, 968, 1027, "direct\ndeposit"],
  ["in", 1428, 366, 1570, 418, "instant"], ["bl", 1305, 476, 1613, 595, "PayPal\nFee=1% to ~allyDebit"], ["bl", 1492, 181, 1750, 300, "Ally Checking\nDebit Card"],
  ["in", 1434, 664, 1579, 716, "instant"], ["in", 1045, 607, 1187, 677, "instant"], ["pu", 1116, 709, 1391, 799, ">$300/day\n>$2000/rolling 30 days", "xs"],
  ["in", 1091, 832, 1232, 902, "direct\ndeposit"], ["bl", 1492, 832, 1750, 950, "Coinbase\n(Fee=??)"], ["in", 1551, 1046, 1692, 1099, "5 min"],
  ["in", 1823, 202, 1964, 254, "instant"], ["bl", 2037, 181, 2297, 300, "ATM\nFee=Operator,\n$10/mo ~reimbur."], ["in", 2095, 379, 2237, 431, "instant"],
  ["bl", 2037, 511, 2297, 631, "Cash"], ["in", 2095, 686, 2237, 738, "instant"], ["bl", 2037, 832, 2297, 950, "People"],
  ["bl", 1774, 772, 1970, 925, "Online &\nRetail\nCrypto\nMerchants"], ["bl", 2024, 1039, 2282, 1217, "Bitpay\nWallet\n "],
  ["pu", 2391, 819, 2969, 1124, ">$25000 card limit (overall)\n>$10000 a day load\n>$10000 a day spend\n>3.0% foreign transaction surcharge\n>1% Transaction Fee\n>$5 fee ACH debit using routing and acct #s\n>$15 ACH Decline Fee (avoid by using PIN)\n>Request cash back at POS using PIN to\navoid $2.00 ATM fee", "s"],
  ["bl", 505, 1387, 813, 1505, "PayPal\nDebit MasterCard\nBusiness"], ["bl", 1081, 1297, 1367, 1420, "Ally Checking\nDirect Deposit"], ["bl", 1491, 1153, 1750, 1270, "Cryptocurrency\nAddress"],
  ["bl", 2027, 1306, 2414, 1483, "Bitpay\nReloadable\nVISA\nFee=$5/mo after 90 days\ninactive"], ["bl", 2633, 1236, 2998, 1358, "Second Bitpay Account\nCard to Card Transfer\nLimit= $500/Day"], ["bl", 2556, 1393, 2752, 1547, "Online &\nRetail VISA\nMerchants"],
  ["bl", 985, 1608, 1243, 1726, "RS Gold Seller"], ["in", 1023, 1798, 1185, 1885, "<=30\nmin?"], ["bl", 985, 1976, 1243, 2093, "RS Gold Farm"], ["in", 1280, 2050, 1442, 2137, "<=30\nmin?"], ["bl", 1514, 2093, 1772, 2212, "RS Gold Buyer"],
  ["in", 1571, 1765, 1712, 1817, "5 min"], ["bl", 1796, 1714, 2053, 1831, "Store\nFee=$4.95"], ["in", 1961, 1587, 2104, 1639, "instant"],
  ["bl", 2096, 1681, 2354, 1799, "ATM\nFee=2.00\n         +Operator"], ["pu", 2542, 1651, 2800, 1828, "$750/transaction\n$3000/day"], ["in", 1912, 1877, 2053, 1929, "instant"], ["bl", 2080, 1921, 2370, 2040, "Cash\n "], ["bl", 515, 1976, 803, 2093, "Online Sales"],
  ["bl", 3061, 40, 4024, 158, "Best Prepaid Debit Cards", "l"], ["bl", 3061, 158, 4024, 276, "https://bitpay.com/card/dashboard\nhttps://bitpay.com/card/resources/Fees.pdf", "l"], ["bl", 3061, 280, 4024, 399, "Paypal Cash Card Info\nPayPal Cash Card Help", "l"], ["bl", 3057, 412, 4021, 532, "https://www.paypal-prepaid.com/account/dashboard", "l"],
  ["bl", 3057, 536, 4021, 1304, "*PayPal Prepaid Card Info\n--------------------------------------\nCC#=0000 0000 0000 0000\nEXP=00/00\nCSV=000\nNAME=CARD HOLDER\nZIP=00000\nTYPE=DEBIT\nCO=MASTERCARD\nPIN=0000\nROUTING_NUMBER=000000000\nACCOUNT_NUMBER=0000000000000\n \n "],
  ["bl", 3057, 1327, 4329, 1531, "*Services\n----------------------------------\n>Check Request .... $5.95\n>Stop Payment for Preauthorized Payments .... $10.00\n "],
  ["bl", 3057, 1542, 4329, 1828, "*Withdrawal Fees\n-----------------------\n>OTC - Financial institution .... $2.50\n>OTC - Netspend Reload Net .... Varies\n>ATM Cash .... $1.95 + ATM Operator Fee\n>ATM Decline Fee .... $1.00\n**Tip* Select DEBIT and enter PIN to get cash back when making purchases\n "],
  ["bl", 3057, 1835, 4329, 2064, "*Deposit Fees\n-----------------------\n>Mobile Check Load ... charged by check service provider\n>Cash Value Load Fee - Netspend Reload Network Location ... charged by location operator\n>Direct Deposit .... No Fee\n>Funds Transfer Fee ... Varies (See Online Account Center)"],
  ["bl", 4327, 40, 5291, 758, "Rent Hardware for $/hr\nsearch:'vast.ai do threads count as cores threadripper'\nVectorDash\nhttps://www.reddit.com/r/Folding/comments/a4jyil/fah_can_run_on\n_rented_cloud_machines_vastai/\n\nhttps://curecoin.net/merged-folding-profit-calculator/\n\nhttps://www.reddit.com/r/gpumining/comments/8xu04h/vastai_beta\n_is_live_machines_can_be_listed_today/\n\nhttps://golem.network/\n\nIAGON\n\nhttps://bitcoinist.com/gpu-miners-may-soon-have-another-way-to-\nmake-money/", "l"],
];
/* a leading * makes a line bold; ~ marks the rest of a line as misspelt */
const line = (x: string) => {
  if (x[0] === "*") return html`<div class="bd">${x.slice(1)}</div>`;
  const [a, b] = x.split("~");
  return html`<div>${a}${b ? html`<span class="sp">${b}</span>` : nothing}</div>`;
};
/* [x1, y1, x2, y2, start marker, end marker, dotted] */
type Wire = [number, number, number, number, string, string, boolean?];
const WIRES: Wire[] = [
  [703, 254, 703, 298, "", "a"], [703, 443, 703, 535, "", "a"], [703, 692, 703, 772, "", "a"], [1160, 343, 834, 830, "d", "a", true], [220, 724, 220, 789, "q", "a", true], [573, 830, 350, 848, "", "a"], [220, 917, 220, 1013, "c", "a"],
  [703, 891, 536, 1007, "", "a"], [703, 891, 1113, 1608, "", "a"], [1081, 1360, 832, 831, "", "a"], [1305, 536, 832, 830, "", "a"], [1246, 703, 1187, 645, "d", "a", true], [1492, 890, 832, 830, "", "a"],
  [1460, 476, 1621, 300, "", "a"], [1621, 832, 1460, 595, "", "a"], [1621, 832, 1621, 300, "", "a"], [1750, 241, 2037, 241, "", "a"], [2167, 300, 2167, 511, "", "a"], [2167, 631, 2167, 832, "", "a"],
  [1621, 1153, 1621, 950, "", "a"], [2143, 1036, 1873, 925, "c", "a"], [2673, 1130, 2415, 1395, "d", "a", true], [2024, 1128, 1750, 1212, "a", "a"], [2154, 1217, 2220, 1306, "a", "a"], [2027, 1395, 1367, 1358, "a", "a"], [1081, 1359, 813, 1446, "a", "a"],
  [534, 1160, 659, 1387, "a", "a"], [658, 1968, 658, 1505, "c", "a"], [2220, 1483, 1243, 1667, "a", "a"], [1924, 1714, 2220, 1483, "", "a"], [2222, 1483, 2225, 1681, "a", "a"], [2414, 1395, 2633, 1297, "a", "a"], [2414, 1395, 2556, 1470, "", "a"],
  [2533, 1740, 2354, 1740, "q", "a", true], [2225, 1809, 2225, 1921, "c", "a"], [2073, 1974, 1924, 1831, "c", "a"], [1114, 1726, 1114, 1976, "", "a"], [1243, 2036, 1514, 2152, "", "a"], [1643, 2093, 1621, 1270, "", "a"],
];
const MTABS: [unknown, string][] = [[I.drive(), "runescape - Google Drive"], [I.draw(), "PayPal-Prepaid-Money"], [I.sheet(), "GE Tracker - Goog"], [I.sheet(), "Runescape_DB_X"], [I.sheet(), "Bittrex_API_Data"], [I.sheet(), "Bittrex_API_Data"], [I.sheet(), "BITTREX_API_DB"], [I.sheet(), "Bittrex_API_Data"], [box(svg`<path d="M1 10l4-6 4 6-4 5z" fill="#e8453c"></path><path d="M7 4l4-3 4 4-5 9z" fill="#1aa3c8"></path><path d="M2 4h6v5H2z" fill="#fbbc05"></path>`), "BittrexAPI"], [I.google(), "population of m"], [badge("#54463a", "os"), "Grand Exchange"], [I.bag(), "Manage active l"], [I.bagDark(), "My eBay All Sell"]];

class DrawingWindow extends LitElement {
  static styles = [base, css`
    :host { width: 1920px; height: 1440px; padding: 162px 0 198px; background: #000; }
    .win { height: 1080px; background: #fff; }
    .strip { background: linear-gradient(90deg, #7fa9c9, #b4d2f0 3%, #b7d3ef 88%, #7ea6bd 92%, #5f93a6); padding-left: 8px; }
    .tab { background: #dee1e6; width: 132px; flex: none; gap: 8px; padding: 0 12px; border-radius: 8px 8px 0 0; }
    .tab + .tab:not(.on)::after { content: ""; width: 1px; height: 20px; background: #80868b; margin-right: -12px; }
    .body { height: 872px; flex: none; display: flex; }
    .main { width: 1866px; display: flex; flex-direction: column; border-right: 1px solid #dadce0; }
    .ruler { height: 17px; flex: none; display: flex; background: #fff; border-bottom: 1px solid #dadce0; }
    .ruler .z { width: 13px; border-right: 1px solid #dadce0; background: #f8f9fa; }
    .ruler .m { width: 20px; background: #e8eaed; }
    .ruler .t { flex: 1; background:
      repeating-linear-gradient(90deg, #b4b8bc 0 1px, transparent 1px 25.03px) 24px 2px / auto 12px repeat-x,
      repeating-linear-gradient(90deg, #c4c7ca 0 1px, transparent 1px 6.2575px) 24px 6px / auto 5px repeat-x; }
    .under { flex: 1; display: flex; min-height: 0; }
    .vr { width: 14px; border-right: 1px solid #dadce0; background: linear-gradient(#e8eaed 35px, #fff 35px); display: flex; justify-content: center; padding-top: 42px; }
    .vr i { width: 5px; background: repeating-linear-gradient(#c4c7ca 0 1px, transparent 1px 6.2575px); }
    .stage { flex: 1; background: #f8f9fb; padding: 34px 0 0 18px; overflow: hidden; }
    .page { position: relative; width: 1818px; height: 750px; background: #fff; border: 1px solid #c6c9cc; }
    .page > svg { position: absolute; left: -13px; top: -11px; }
    .n { position: absolute; display: flex; flex-direction: column; justify-content: center; border: 1px solid #7b8087; padding-left: 4.800px; font: 9.700px/11.500px "Liberation Sans", Arial, sans-serif; white-space: pre; color: #000; }
    .n.bl { background: #cfe2f3; } .n.in { background: #d9ead3; } .n.pu { background: #d9d2e9; } .n.gr { background: #93c47d; }
    .n.s { font-size: 9.050px; line-height: 11px; } .n.xs { font-size: 8px; line-height: 10px; padding-left: 4px; }
    .n.l { font-weight: 700; color: #000099; text-decoration: underline; } .n.bl div { min-height: 11.500px; } .bd { font-weight: 700; }
    .sp { border-bottom: 1px dotted #e88; }
    .rail { flex: 1; display: flex; flex-direction: column; align-items: center; padding-top: 19px; gap: 38px; }
    .tool .on { background: #e8f0fe; width: 26px; height: 26px; display: flex; align-items: center; justify-content: center; border-radius: 2px; }
    .task { height: 40px; padding-left: 36px; gap: 4px; background: linear-gradient(#a5bcc6 0 1px, #5c8ba0 2px, #3e6b80 40%, #356277); }
    .tb { width: 98px; }
    .orb { width: 46px; height: 38px; border-radius: 50%; margin-right: 26px; background: radial-gradient(circle at 50% 40%, #9fd4f2, #2a6ca8 55%, #143a5e); display: flex; align-items: center; justify-content: center; }
    .tray { display: flex; gap: 7px; align-items: center; margin-left: 12px; }
    .clock { text-align: center; line-height: 15px; margin: 0 18px 0 auto; }
  `];
  render() {
    return html`<div class="col win">
      <div class="strip ui">${MTABS.map(([i, t], k) => html`<div class="tab ${k === 1 ? "on" : ""}">${i}<span class="lbl">${t}</span>${cross()}</div>`)}
        <div class="newtab" style="margin:0 auto 0 8px"><svg width="12" height="12"><path d="M6 0v12M0 6h12" stroke="#444" stroke-width="1.600"></path></svg></div>${controls}<span style="width:3px"></span></div>
      ${navRow(1920, html`<b>docs.google.com</b>/drawings/d/1_17SGz324evM6muwRg1ETgrE4IJn42Iv5VxKntDeXQQ/edit`, false, 141, false)}
      ${marksRow(1920, [])}
      <div class="dochead">
        <svg width="28" height="38" viewBox="0 0 28 38" style="margin-top:13px"><path d="M3 0h15l9 9v26a2 2 0 0 1-2 2H3a2 2 0 0 1-2-2V2a2 2 0 0 1 2-2z" fill="#db4437"></path><path d="M18 0l9 9h-9z" fill="#efa29b"></path><circle cx="12" cy="20" r="4.500" fill="none" stroke="#fff" stroke-width="2.500"></circle><rect x="15" y="23" width="8" height="8" fill="#fff"></rect></svg>
        <div class="grow" style="padding-left:21px">
          <div class="title">PayPal-Prepaid-MoneyCycle <span style="width:2px"></span>${ic("star", 18)}${ic("move", 18)}${ic("cloud", 18)}</div>
          <div class="menus">${track(71, 700, [[71, "File"], [108, "Edit"], [147, "View"], [191, "Insert"], [242, "Format"], [302, "Arrange"], [367, "Tools"], [416, "Help"], [467, html`<span class="edit">Last edit was on March 31, 2019</span>`]])}</div>
        </div>
        <div class="row" style="gap:20px;padding-right:20px">${ic("comment", 23)}<div class="share" style="background:#1a73e8">${ic("people", 17, "#fff")}Share</div>${I.me()}</div>
      </div>
      <div class="body">
        <div class="main">
          <div class="tools tool" style="height:39px;flex:none">${track(0, 1865, [[26, ic("undo")], [55, ic("redo")], [83, ic("print")], [111, ic("paint", 18, "#bdc1c6")], [138, pipe], [148, ic("zoomIn", 20)], [176, caret()], [193, pipe], [199, html`<span class="on">${ic("cursor", 17, "#1a73e8")}</span>`], [232, ic("line")], [259, caret()], [277, ic("shape", 20)], [306, ic("textbox")], [333, ic("image", 20)], [356, caret()], [373, pipe], [382, ic("addComment", 20)], [1837, ic("up")]])}</div>
          <div class="ruler"><span class="z"></span><span class="m"></span><span class="t"></span><span class="m" style="width:17px"></span></div>
          <div class="under"><div class="vr"><i></i></div><div class="stage"><div class="page">
            <svg width="1830" height="780" viewBox="0 0 5490 2340" fill="none" stroke="#000" stroke-width="4">
              <defs>
                <marker id="a" markerUnits="userSpaceOnUse" markerWidth="34" markerHeight="30" refX="30" refY="14" orient="auto-start-reverse"><path d="M2 2L30 14L2 26L11 14z" fill="#000" stroke="none"></path></marker>
                <marker id="c" markerUnits="userSpaceOnUse" markerWidth="24" markerHeight="24" refX="10" refY="10"><circle cx="10" cy="10" r="10" fill="#000" stroke="none"></circle></marker>
                <marker id="d" markerUnits="userSpaceOnUse" markerWidth="28" markerHeight="28" refX="14" refY="14"><path d="M14 0l14 14-14 14L0 14z" fill="#000" stroke="none"></path></marker>
                <marker id="q" markerUnits="userSpaceOnUse" markerWidth="20" markerHeight="20" refX="10" refY="10"><path d="M0 0h20v20H0z" fill="#000" stroke="none"></path></marker>
              </defs>
              ${WIRES.map(([x1, y1, x2, y2, s, e, dot]) => svg`<line x1=${x1} y1=${y1} x2=${x2} y2=${y2} marker-start=${s ? `url(#${s})` : nothing} marker-end=${`url(#${e})`} stroke-dasharray=${dot ? "4 11" : nothing}></line>`)}
            </svg>
            ${NODES.map(([k, l, t, r, b, txt, st]) => html`<div class="n ${k} ${st ?? ""}" style="left:${(l - 39) / 3}px;top:${(t - 33) / 3}px;width:${(r - l + 2) / 3}px;height:${(b - t + 2) / 3}px">${st ? txt : txt.split("\n").map(line)}</div>`)}
          </div></div></div>
        </div>
        <div class="rail">${badge("#4285f4", "31")}<span style="height:2px"></span>${badge("#fbbc04", "♀")}<span style="height:2px"></span>${badge("#1a73e8", "✓", "#fff", 8)}</div>
      </div>
      <div class="task" style="margin-top:auto"><div class="orb"><svg width="20" height="20"><path d="M1 4q4-3 8 0v6q-4-3-8 0z" fill="#f0592a"></path><path d="M10 4q4 3 9 0v6q-5 3-9 0z" fill="#8cc63e"></path><path d="M1 11q4-3 8 0v6q-4-3-8 0z" fill="#2fa4e0"></path><path d="M10 11q4 3 9 0v6q-5 3-9 0z" fill="#fcc419"></path></svg></div>
        ${([[I.chrome(26), "Google..."], [badge("#c22", ""), "VerifiRo..."], [I.chrome(26), "My Do..."], [badge("#d8d03a", "N", "#345"), "Win_1..."], [badge("#e8eef4", "E", "#456"), "E:\\Net..."], [badge("#3b6", ""), "Window..."], [badge("#2b7fd0", "W"), "Winbulk"], [badge("#10243c", "S"), "Steam"], [badge("#234", "O", "#9cf"), "Manag..."], [I.fold(26), "New F..."], [badge("#5bd", "~"), "Strong..."]] as [unknown, string][]).map(([i, t]) => html`<div class="tb">${i}${t}</div>`)}
        <div class="tray">${["#e8eef2", "#3aa0e0", "#d43a2a", "#222", "#5aa", "#e0a020", "#48c", "#9c3", "#c44", "#ddd", "#2a6", "#e66", "#345", "#eee", "#7bd", "#c82", "#29c", "#b33", "#dde", "#3a7", "#e8eef2", "#eee", "#ddd"].map(c => badge(c, "", "#fff", 4))}</div>
        <div class="clock">12:51 AM<br>4/26/2020</div></div>
    </div>`;
  }
}
customElements.define("drawing-window", DrawingWindow);

/* ---------- third monitor: file browser, player, side bar ---------- */

const drv = html`<svg width="16" height="18" viewBox="0 0 16 18"><path d="M2 9l2-4h8l2 4z" fill="#eee" stroke="#888"></path><rect x="1" y="9" width="14" height="6" rx="1" fill="#c9cccf" stroke="#777"></rect><rect x="11" y="10" width="2" height="4" fill="#2b2"></rect></svg>`;
const cdd = html`<svg width="16" height="18" viewBox="0 0 16 18"><circle cx="9" cy="6" r="5.500" fill="#e6e6e6" stroke="#888"></circle><circle cx="9" cy="6" r="1.500" fill="#888"></circle><rect x="1" y="10" width="14" height="6" rx="1" fill="#c9cccf" stroke="#777"></rect></svg>`;
const NAV: [number, unknown, string][] = [
  [0, ic("starFull", 18, "#f39b1c"), "Favorites"], [1, badge("#2a62b8", ""), "Desktop"], [1, badge("#fcfcfc", "♟", "#222"), "~Games~"], [1, badge("#8d96a0", "▤"), "~Apps~"], [1, I.fold(17), "[C;]Public"], [1, I.fold(17), "[N;]Downloads"], [1, I.fold(17), "[MTU]Google Drive"], [1, I.fold(17), "[TechEase_JDK]Google Drive"], [1, I.fold(17), "[TechEase_SVC]Google Drive"], [1, I.fold(17), "Music"], [0, "", ""],
  [0, badge("#7cc3e0", "▥", "#e9d27a"), "Libraries"], [1, badge("#fcfcfc", "♪", "#2a8fe0"), "Music"], [1, badge("#6fb4cf", "▞", "#d8eef0"), "Pictures"], [1, badge("#223", "▶", "#5cf"), "Videos"], [0, "", ""],
  [0, box(svg`<rect x="4" y="1" width="11" height="9" fill="#1b2fae" stroke="#9ab"></rect><path d="M7 12h6v2H7z" fill="#9ab"></path><rect x="0" y="4" width="3.500" height="11" fill="#b8c4cc"></rect>`), "Computer"], [1, drv, "RAPID (A:)"], [1, drv, "Local Disk (C:)"], [1, badge("#3a7fc0", "✿", "#f5c23a"), "BD-ROM Drive (D:) AMAZONTRAIL"], [1, drv, "Storage 1TB (G:)"], [1, cdd, "CD Drive (H:)"], [1, cdd, "CD Drive (J:) Verizon Mobile"], [1, drv, "Removable Disk (K:)"], [1, drv, "Files & Programs (N:)"], [1, drv, "500GB_2.5Spindle (R:)"], [1, drv, "FileShare (T:)"], [1, drv, "Storage (V:)"], [1, drv, "Entertainment (W:)"], [0, "", ""], [0, box(svg`<rect x="5" y="4" width="10" height="9" fill="#1b3fc0" stroke="#9ab"></rect><circle cx="5" cy="5" r="4.500" fill="#3bb04a"></circle><path d="M2 3q3 1 5 4" stroke="#2a8fe0" stroke-width="2" fill="none"></path>`), "Network"],
];
const FILES: [string, string][] = [["Annihilation of the Evil Machine.mp3", "K-RINO"], ["Anti Illuminati Song (mit).mp3", "Anonymous"], ["Anti-NEW WORLD ORDER Free This Town (Remix).mp3", "Chris Geo"], ["Bagus (1990).mp3", "Toshiyuki Honda"], ["Ballad of a Dead Conspiracist Anti New World Anthem (2015).mp3", ""], ["Battle Cry [Ft. K-Rino].mp3", "DISL Automatic"], ["Blank Mafia.mp3", "B.o.B"], ["Blood Doctrine.mp3", "K-RINO"], ["Cause Of Death.mp3", "Immortal Techniq..."], ["Dear NASA, Why Are You Lying  Anti NASA Song (Flat Earth).mp3", ""], ["Diabolic - A.M.E.R.I.C.A. (Truth Part 3) (Produced by Engineer).mp3", ""], ["Dying Nation.mp3", "Cunninlynguists"], ["End Of Days ! An Anti 'NEW WORLD ORDER' Meaningful RAP song.mp3", ""], ["First in Line.mp3", "Helltrash"], ["FREE FALL.mp3", "Born of Osiris"], ["Head Held High  [Ft. Steve Grant] & PTP.mp3", "DISL Automatic"], ["ISM.mp3", "Savant"], ["Killuminati (Produced By HST) [Anonymous Rap].mp3", "Phrak"], ["Let It Burn.mp3", ""], ["LISTEN.mp3", "Jordan Page"], ["Living in Hell.mp3", ""], ["Nothing but the Truth.mp3", ""], ["NWO Song (Sheeple drinking Kool Aid) 2013 - WAKE UP AMERICA!!.mp3", ""], ["Our Truth.mp3", "LACUNA COIL"], ["RESIST GLOBAL FICTION.mp3", "DISL Automatic"], ["Rock and Roll Flat Earth Song (The Zetetic Astronomers).mp3", "Neo Retros"], ["Sonic Weapons.mp3", "EMBED"], ["Source Field.mp3", "Born of Osiris"], ["Sweet City Woman.mp3", "The Stampeders"], ["The Great Art of Living.mp3", "Jay Ray"]];
const mp3 = html`<svg width="13" height="16" viewBox="0 0 13 16"><path d="M.5.5h8l4 4v11H.5z" fill="#cfe6fa" stroke="#3f7fbf"></path><path d="M8.500.5v4h4" fill="#5aa0de" stroke="#3f7fbf"></path><path d="M3 10h2V6h3v4h2" fill="none" stroke="#123" stroke-width="1.300"></path></svg>`;
const EQ: [string, number][] = [["PRE", 17], ["70", 13], ["180", 26], ["320", 22], ["600", 17], ["1K", 17], ["3K", 17], ["6K", 12], ["12K", 12], ["14K", 13], ["16K", 11]];

class MusicDesktop extends LitElement {
  static styles = [base, css`
    :host { width: 1280px; height: 1440px; padding: 218px 0 198px; background: #000; }
    .desk { position: relative; height: 1024px; background: linear-gradient(120deg, #3f7d7c, #468886 60%, #3f7d7c); overflow: hidden; font: 12px "Open Sans", sans-serif; letter-spacing: -.48px; }
    .win { position: absolute; }
    .bgw { left: -10px; top: 198px; width: 107px; height: 800px; border-radius: 6px; background: linear-gradient(#5e9aa6 64px, #dfe7f3 64px 100px, #e8eef8 118px, #fff 118px); border: 1px solid #1c3c46; border-right: 7px solid #4f8a97; display: flex; justify-content: flex-end; }
    .bgw .s { width: 17px; margin-top: 118px; background: #f0f0f0; padding: 423px 1px 0; } .bgw .s i { display: block; height: 42px; border: 1px solid #999; border-radius: 2px; background: linear-gradient(90deg, #f4f4f4, #cfcfcf); }
    .blk { left: 359px; top: 851px; width: 877px; height: 43px; background: #000; }
    .ex { left: 98px; top: 0; width: 1138px; height: 856px; border: 1px solid #16323b; border-radius: 7px; padding: 0 7px 6px 6px; background: linear-gradient(105deg, #8fb6c0, #5f9daa 8%, #4a8c9b 30%, #5b9aa7 60%, #4a8998); box-shadow: inset 0 0 0 1px #a9d0da, 0 0 6px rgba(0,0,0,.5); display: flex; flex-direction: column; }
    .cap { height: 34px; display: flex; justify-content: flex-end; }
    .cap .c { display: flex; height: 18px; border: 1px solid #2c5864; border-top: 0; border-radius: 0 0 5px 5px; color: #fff; font-weight: 700; box-shadow: 0 0 0 1px #9cc4cd; } .cap .c span { display: flex; align-items: center; justify-content: center; width: 28px; border-right: 1px solid #2c5864; } .cap .c span:last-child { width: 46px; border: 0; }
    .addr { height: 30px; display: flex; align-items: center; gap: 6px; }
    .circ { width: 24px; height: 24px; border-radius: 50%; border: 1px solid #cfe0ea; background: radial-gradient(circle at 50% 30%, #6fa8e8, #123f8f 60%); display: flex; align-items: center; justify-content: center; } .circ.off { background: radial-gradient(#a9c7ce, #7fa9b3); }
    .field { height: 22px; border: 1px solid #39707c; background: #c8dcdf; box-shadow: 0 0 0 1px #86b3bd; display: flex; align-items: center; color: #2d4348; padding: 0 5px; }
    .crumbs { display: flex; gap: 9px; } .crumbs span::before { content: "▸"; color: #000; margin-right: 8px; font-size: 14px; line-height: 12px; }
    .pane { margin-top: 1px; border: 1px solid #1e4a55; background: #fff; flex: 1; display: flex; flex-direction: column; min-height: 0; }
    .mb { height: 21px; display: flex; align-items: center; gap: 16px; padding-left: 10px; background: linear-gradient(#fdfdff, #dde3f1 60%, #d6dcee); border-bottom: 1px solid #c3cbdc; color: #000; }
    .cb { height: 31px; background: linear-gradient(#fbfdff, #e8effa 50%, #dae4f5 51%, #e3ecf8); border-bottom: 1px solid #a9bfd9; color: #1e395b; }
    .mid { height: 680px; display: flex; background: #fcfcfc; flex: none; }
    .navp { width: 352px; border-right: 1px solid #d9e5f2; padding-top: 30px; color: #000; }
    .ni { display: flex; align-items: center; gap: 5px; height: 21px; padding-left: 18px; margin-right: 2px; white-space: nowrap; } .ni.k { padding-left: 28px; } .ni.sel, .fr.sel { background: linear-gradient(#fafafa, #e6e6e6); box-shadow: inset 0 0 0 1px #d4d4d4; border-radius: 2px; }
    .files { width: 755px; display: flex; flex-direction: column; overflow: hidden; }
    .fh { height: 51px; padding-bottom: 12px; color: #4c607a; flex: none; }
    .fr { height: 21px; flex: none; display: flex; align-items: center; padding-left: 6px; margin-left: 14px; white-space: pre; gap: 6px; color: #000; } .fr span { width: 603px; } .fr em { font-style: normal; color: #6d6d6d; letter-spacing: -.35px; }
    .hsb { height: 16px; margin-top: auto; background: #efefef; padding: 0 4px; display: flex; align-items: center; gap: 7px; font-size: 8px; } .hsb i { width: 598px; height: 14px; border: 1px solid #989898; border-radius: 2px; background: linear-gradient(#f3f3f3, #e2e2e2 50%, #cfcfcf 50%, #dcdcdc); text-align: center; font-style: normal; line-height: 12px; }
    .vsb { width: 15px; background: #f0f0f0; padding: 2px 0; display: flex; flex-direction: column; align-items: center; font-size: 7px; color: #444; } .vsb i { width: 14px; height: 427px; border: 1px solid #989898; border-radius: 2px; background: linear-gradient(90deg, #f5f5f5, #cfcfcf); margin: 5px 0 auto; }
    .det { flex: 1; background: #f0f4fb; border-top: 2px solid #cdd9ea; display: flex; align-items: center; color: #5a6779; }
    .det .g { display: grid; grid-template-columns: 252px 110px 134px 47px 118px 62px 118px 45px 160px; row-gap: 2px; white-space: nowrap; line-height: 17px; } .det b { font-weight: 400; color: #1e395b; display: flex; gap: 4px; align-items: center; } .det .t { color: #000; } .rt { text-align: right; padding-right: 4px; }
    .side { left: 1236px; top: 218px; width: 39px; height: 676px; background: #1e1e1e; border-right: 1px solid #444; display: flex; flex-direction: column; align-items: center; padding-top: 11px; gap: 10px; padding-right: 8px; }
    .amp { left: 349px; top: 867px; width: 866px; height: 117px; background: #22262b; border: 1px solid #0a0a0a; display: flex; flex-direction: column; color: #c9ced4; }
    .at { height: 16px; display: flex; align-items: center; gap: 9px; padding: 0 4px; background: linear-gradient(#5d6170, #34373f 50%, #22242a); font-size: 11px; } .at u { text-decoration: none; } .at b { color: #d9dde2; margin-right: 10px; font-size: 11px; }
    .ab { flex: 1; display: grid; grid-template-columns: 302px 187px 348px; gap: 9px; padding: 4px 0 5px 6px; }
    .lcd { background: #07090b; border-bottom: 1px solid #555; } .l1 { text-align: right; padding: 2px 3px 0; color: #8f9ba8; font-weight: 700; line-height: 16px; white-space: nowrap; overflow: hidden; }
    .btn { display: flex; align-items: center; justify-content: center; background: linear-gradient(#a9abae, #5c5f63); color: #15171a; border: 1px solid #111; height: 18px; font-size: 10px; } .btn.w { width: 21px; }
    .eq { background: #0a0b0d; display: flex; flex-direction: column; font-size: 6.500px; color: #888; letter-spacing: 0; } .fad { flex: 1; display: flex; justify-content: space-around; padding: 0 3px; } .fad div { width: 11px; display: flex; flex-direction: column; align-items: center; justify-content: flex-end; } .fad div:first-child { margin-right: 8px; }
    .wm { position: absolute; right: 6px; top: 950px; color: #fff; text-align: right; line-height: 17.500px; font-size: 12px; }
    .task { position: absolute; left: 0; right: 0; bottom: 0; height: 40px; padding-left: 2px; gap: 3px; background: linear-gradient(#9ab3bb 0 1px, #4f7e8a 2px, #3d6b79); }
    .tb { width: 138px; height: 38px; } .tb.rl { background: linear-gradient(#dfa82a, #e9c51f 30%, #d8751a); padding-left: 8px; }
  `];
  render() {
    return html`<div class="desk">
      <div class="win bgw"><div class="s"><i></i></div></div>
      <div class="win blk"></div>
      <div class="win side">${cross("#ddd")}${[badge("#1e1e1e", "⚒", "#bbb"), badge("#1e1e1e", "▙", "#3a8"), badge("#1e1e1e", "♞", "#c96"), badge("#3b8fc0", "", "#fff", 8), badge("#b58a5a", "✦", "#fff", 8), badge("#1e1e1e", "Y", "#e0a81c"), badge("#1e1e1e", "▣", "#d9861c"), badge("#a44", "▦", "#ddd"), badge("#1e1e1e", "✎", "#ccc"), badge("#1e1e1e", "✐", "#bba"), badge("#aab", "i", "#335", 8)]}</div>
      <div class="win ex">
        <div class="cap"><div class="c"><span><svg width="11" height="4"><rect width="11" height="4" fill="#fff" stroke="#444" stroke-width=".6"></rect></svg></span><span><svg width="10" height="9"><rect x="1" y="1" width="8" height="7" fill="none" stroke="#fff" stroke-width="2"></rect></svg></span><span>${cross("#fff")}</span></div></div>
        <div class="addr"><span class="circ" style="margin-left:3px">${ic("back", 15, "#fff")}</span><span class="circ off">${ic("fwd", 14, "#cfe0e4")}</span><span>${caret("#123a6a")}</span>
          <div class="field grow" style="margin-right:2px">${I.fold(17)}<div class="crumbs grow" style="margin-left:4px"><span>Computer</span><span>Storage (V:)</span><span>O_DRIVE</span><span>My Music</span><span>Best Picks Mp3</span><span>-[toORGANIZE XXVII]-</span></div>${caret("#000")}<span style="width:12px"></span>${ic("reload", 14, "#2a5fa8")}</div>
          <div class="field" style="width:190px;font-style:italic;color:#5a7a80;white-space:nowrap"><span class="grow">Search -[toORGANIZE XXVII]-</span><svg width="13" height="13"><circle cx="8" cy="5" r="4" fill="none" stroke="#2a6fc0" stroke-width="1.800"></circle><path d="M5 8l-4 4" stroke="#2a6fc0" stroke-width="2"></path></svg></div></div>
        <div class="pane">
          <div class="mb"><span>File</span><span>Edit</span><span>View</span><span>Tools</span><span>Help</span></div>
          <div class="cb">${track(4585, 5708, [[4603, html`Organize&nbsp;${caret("#1e395b")}`], [4692, I.bolt(18)], [4714, "Play in Winamp"], [4807, caret("#1e395b")], [4845, "Play all"], [4912, html`Share with&nbsp;${caret("#1e395b")}`], [5011, "New folder"], [5586, ic("list", 18, "#5a6a80")], [5611, caret("#1e395b")], [5641, html`<svg width="16" height="14"><rect x=".5" y=".5" width="15" height="13" fill="#fff" stroke="#246"></rect><rect x="10" y="2" width="4" height="11" fill="#7bb6e0"></rect></svg>`], [5677, badge("#2352b0", "?", "#fff", 8)]])}</div>
          <div class="mid">
            <div class="navp">${NAV.map(([k, i, t]) => html`<div class="ni ${k ? "k" : ""} ${t === "Storage (V:)" ? "sel" : ""}">${i}${t}</div>`)}</div>
            <div class="files">
              <div class="fh">${track(4937, 5692, [[4955, "Name"], [5380, "#"], [5413, html`<span class="sep"></span>`], [5421, "Title"], [5573, html`<span class="sep"></span>`], [5580, "Contributing artists"]])}</div>
              ${FILES.map(([f, a]) => html`<div class="fr ${f.startsWith("Killum") ? "sel" : ""}">${mp3}<span>${f}</span><em>${a}</em></div>`)}
              <div class="hsb">◂<i>III</i><span class="grow"></span>▸</div>
            </div>
            <div class="vsb">▲<i></i>▼</div>
          </div>
          <div class="det"><svg width="36" height="44" viewBox="0 0 36 44" style="margin:0 19px 0 22px"><path d="M1 1h25l9 9v33H1z" fill="#bfe0f8" stroke="#2a7fd0" stroke-width="2"></path><path d="M26 1v9h9" fill="#3f90da"></path><path d="M24 18L12 30l6 1-4 10 12-13-6-1 6-9z" fill="#f39b1c"></path></svg>
            <div class="g"><span class="t">Killuminati (Produced By HST) [Anonymou...</span><span class="rt">State:</span><b><svg width="17" height="14" viewBox="0 0 17 14"><circle cx="5" cy="3.500" r="3" fill="#b5763f"></circle><path d="M0 13q1-6 5-6t5 6z" fill="#4fa36a"></path><circle cx="11.500" cy="3.500" r="3" fill="#d9a66a"></circle><path d="M7 13q1-6 5-6t5 6z" fill="#4a8fc0"></path></svg>Shared</b><span class="rt">Album:</span><b>Specify album</b><span class="rt">Length:</span><b>00:04:07</b><span class="rt">Year:</span><b>Specify the year this med...</b>
            <span>MPEG Layer 3 Audio File</span><span class="rt">Contributing artists:</span><b>Phrak</b><span class="rt">Genre:</span><b>Other</b><span class="rt">Rating:</span><b>${[0, 1, 2, 3, 4].map(() => ic("star", 13, "#b4bac4"))}</b></div></div>
        </div>
      </div>
      <div class="win amp">
        <div class="at">${badge("#c26a1c", "~")}<b>WINAMP</b><u>File</u><u>Play</u><u>Options</u><u>View</u><u>Help</u><span class="grow"></span>${["▁", "□", "T"].map(t => html`<span class="btn" style="width:16px;height:12px">${t}</span>`)}${badge("#c26a1c", "x")}</div>
        <div class="ab">
          <div class="col">
            <div class="lcd" style="height:31px"><div class="l1">ced By HST) [Anonymous Rap] -- Phrak (4:07)</div><div style="text-align:right;font-size:9px;line-height:9px;padding-right:48px">256 KBPS&nbsp; 48 KHZ</div></div>
            <div class="row"><div class="lcd" style="width:180px;height:21px;padding:7px 14px"><svg width="74" height="2"><rect width="74" height="1.500" fill="#567"></rect></svg></div><span class="btn w" style="margin-left:12px;height:12px">◂</span><svg width="76" height="12" style="margin-left:10px"><rect y="5" width="76" height="2" fill="#000"></rect><rect y="5" width="20" height="2" fill="#9ab"></rect><rect x="17" y="1" width="14" height="9" rx="2" fill="#d8d8d8"></rect></svg></div>
            <svg width="298" height="3" style="margin:7px 2px"><rect width="298" height="3" fill="#000"></rect></svg>
            <div class="row" style="margin:3px 2px 0">${["M2 2h2v8H2zM10 2v8L4 6z", "M3 1l7 5-7 5z", "M2 1h3v10H2zM7 1h3v10H7z", "M2 2h8v8H2z", "M8 2h2v8H8zM2 2v8l6-4z"].map(t => html`<span class="btn w"><svg width="11" height="11" viewBox="0 0 12 12"><path d=${t} fill="#15171a"></path></svg></span>`)}<span class="grow"></span><span class="btn w">▲</span><span class="btn" style="width:52px;margin:0 8px">⟳ &nbsp; ↻</span>${I.bolt(18)}</div>
          </div>
          <div class="eq"><div class="row" style="height:16px;gap:4px;padding:0 3px"><span class="btn w" style="height:11px">⇄</span><span>◂ 0 ▸</span><span class="grow"></span>L<svg width="70" height="9"><rect y="4" width="70" height="1.500" fill="#444"></rect><rect x="27" width="15" height="9" rx="2" fill="#ccc"></rect></svg>R</div>
            <div class="fad">${EQ.map(([t, v]) => html`<div><svg width="8" height="52" viewBox="0 0 8 52"><rect x="3.500" width="1.500" height="50" fill="#333"></rect><rect x="1" y=${v} width="6" height="14" rx="2" fill="#d5d5d5"></rect></svg>${t}</div>`)}</div>
            <div class="row"><span class="btn" style="width:25px;height:12px;color:#bfe4ff">ON</span><span class="btn" style="width:32px;height:12px">AUTO</span><span class="btn" style="width:46px;height:12px">PRESETS</span><span class="grow"></span>${["⌕", "↦", "≡"].map(t => html`<span class="btn" style="width:24px;height:12px">${t}</span>`)}</div></div>
          <div class="col"><div class="lcd grow row" style="align-items:flex-start;justify-content:space-between;padding:2px 5px;font-size:13px"><span>1. Killuminati (Produced By HST) [Anonymous Rap] --...</span><span>4:07</span><svg width="8" height="18"><rect width="8" height="18" rx="2" fill="#999"></rect></svg></div>
            <div class="row">${["+", "−", "⊞", "MISC", "≔"].map(t => html`<span class="btn" style="width:24px;height:13px;font-size:8px">${t}</span>`)}<span class="grow"></span><span style="font-size:10px;letter-spacing:1px;margin-right:78px">0:00/4:07</span><span class="btn" style="width:22px;height:13px">◊</span></div></div>
        </div>
      </div>
      <div class="wm">Windows 7<br>Build 7601</div>
      <div class="task">${([[I.chrome(28), "The 144000 - ..."], [I.bolt(28), "1. Killuminati ..."], [I.chrome(28), "Inbox (151) - ..."], [I.chrome(28), "We Have It All..."], [I.chrome(28), "ALERT! 4 War..."], [I.chrome(28), "Perfectfire33/..."], [I.fold(28), "-[toORGANIZ..."], [I.fold(28), "-[toORGANIZ..."], [html`<svg width="30" height="30"><rect width="30" height="30" rx="6" fill="#101418"></rect><text x="2" y="22" font-size="19" font-family="Liberation Serif" fill="#eee">R<tspan fill="#f60">L</tspan></text></svg>`, "RuneLite"]] as [unknown, string][]).map(([i, t]) => html`<div class="tb ${t === "RuneLite" ? "rl" : ""}">${i}${t}</div>`)}</div>
    </div>`;
  }
}
customElements.define("music-desktop", MusicDesktop);

class AppRoot extends LitElement {
  static styles = css`
    :host { display: block; width: 4096px; height: 1024px; overflow: hidden; background: #000; }
    .screens { zoom: 0.7111111; width: 5760px; height: 1440px; display: grid; grid-template-columns: 2560px 1920px 1280px; overflow: hidden; }
  `;
  render() {
    return html`<div class="screens"><sheet-window></sheet-window><drawing-window></drawing-window><music-desktop></music-desktop></div>`;
  }
}
customElements.define("app-root", AppRoot);
